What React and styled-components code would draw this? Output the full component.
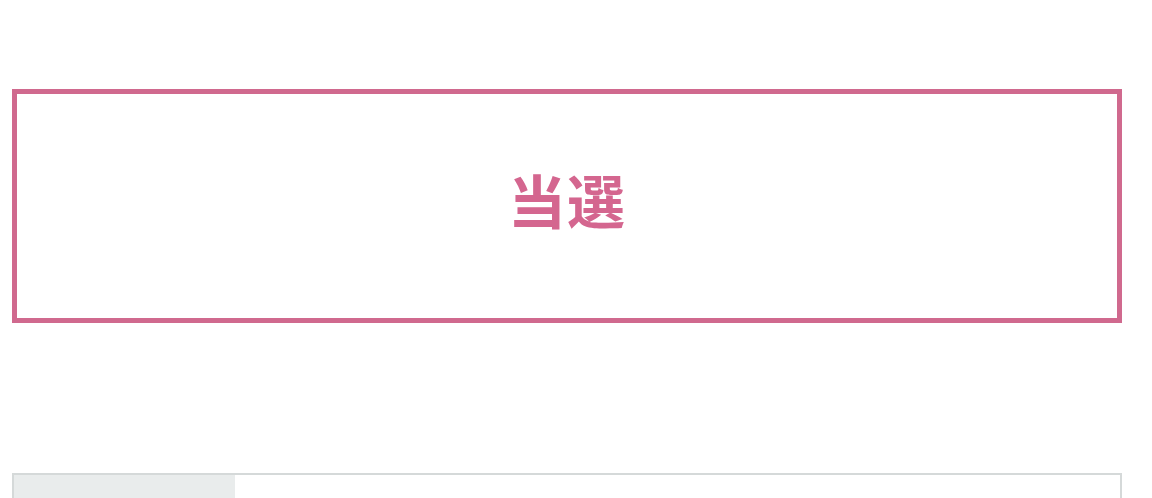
import React from 'react';
import styled, { createGlobalStyle } from 'styled-components';

const GlobalStyle = createGlobalStyle`
  body {
    margin: 0;
    background: #fff;
    font-family: "Noto Sans CJK JP", "Noto Sans", sans-serif;
  }
`;

const Page = styled.div`
  padding: 89px 30px 0 12px;
`;

const ResultBox = styled.div`
  box-sizing: border-box;
  width: 1110px;
  height: 234px;
  border: 5px solid #d0698e;
  display: flex;
  align-items: center;
  justify-content: center;
`;

const ResultText = styled.h2`
  margin: 0 0 14px;
  color: #d4668f;
  font-size: 58px;
  font-weight: 700;
  line-height: 1;
  letter-spacing: 1px;
`;

const InfoTable = styled.table`
  margin-top: 150px;
  width: 1110px;
  border-collapse: collapse;
  border: 2px solid #d5d9d9;
`;

const HeadCell = styled.th`
  width: 189px;
  height: 60px;
  background: #e9ecec;
  font-size: 16px;
  font-weight: 400;
  text-align: left;
  padding: 0 16px;
`;

const BodyCell = styled.td`
  padding: 0 16px;
  font-size: 16px;
`;

export default function App() {
  return (
    <>
      <GlobalStyle />
      <Page>
        <ResultBox>
          <ResultText>当選</ResultText>
        </ResultBox>
        <InfoTable>
          <tbody>
            <tr>
              <HeadCell />
              <BodyCell />
            </tr>
          </tbody>
        </InfoTable>
      </Page>
    </>
  );
}
